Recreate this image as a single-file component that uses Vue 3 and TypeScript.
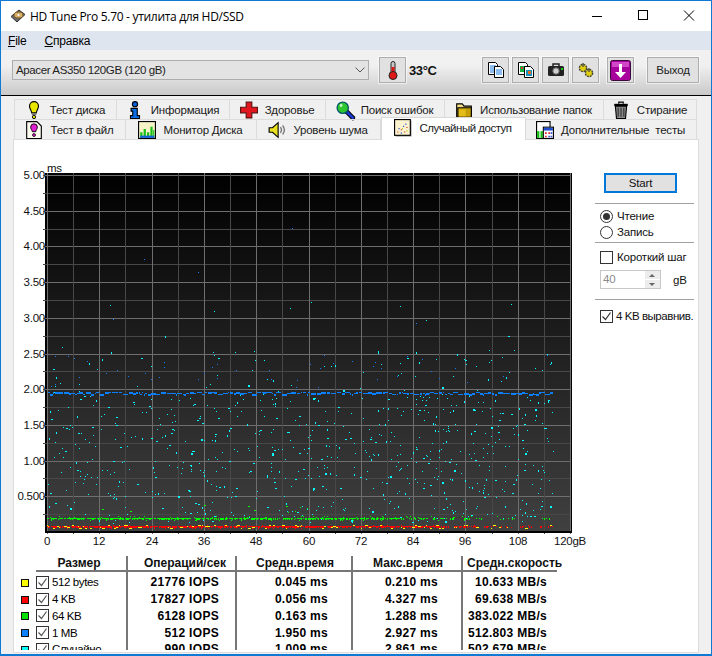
<script setup lang="ts">
type Tab = { label: string; icon: string; width: number; active?: boolean }

const icons: Record<string, string> = {
  bulb: '<path d="M4 4.600a4 4 0 1 1 8 0c0 2-1.600 3.400-2 6H6c-.4-2.600-2-4-2-6z" fill="#e6e600" stroke="#000"/><rect x="6" y="11" width="4" height="1.500" fill="#777"/><circle cx="8" cy="14.200" r="1.500" fill="#d8d800" stroke="#000" stroke-width=".8"/>',
  info: '<circle cx="8" cy="2.800" r="2.300" fill="#0a63dc" stroke="#000"/><path d="M4.500 6.500h5.500v6.500h2v2.500H4V13h2V9H4.500z" fill="#0a6ee6" stroke="#000"/>',
  cross: '<path d="M5.500 1h5v4.500H15.500v5H10.500V15h-5v-4.500H.5v-5h5z" fill="#e2161f" stroke="#5a1010"/>',
  lens: '<path d="M9.500 9.500l5.500 5.500" stroke="#000" stroke-width="4.200" stroke-linecap="round"/><path d="M9.500 9.500l5.500 5.500" stroke="#1a38d0" stroke-width="2.400" stroke-linecap="round"/><circle cx="6" cy="6" r="5" fill="#2fc72f" stroke="#056" stroke-width="1.200"/><circle cx="4.500" cy="4" r="1.300" fill="#c8f5c8"/>',
  folder: '<path d="M1.500 14.500V2.500h5l1.500 2h6.500v10z" fill="#f4e08a" stroke="#000"/><path d="M2.500 14.500V6h12v8.500z" fill="#c79f08" stroke="#000"/><path d="M3.500 7.500h6v6h-6z" fill="#e3bd1a"/>',
  trash: '<path d="M2 3.500h12" stroke="#000" stroke-width="2"/><path d="M3 4.500h10l-1 11H4z" fill="#8a8a8a" stroke="#000"/><path d="M5.500 6v8M8 6v8M10.500 6v8" stroke="#333"/><path d="M6 2.500V1h4v1.500" fill="none" stroke="#000"/>',
  pagebulb: '<path d="M1.500.5h9l4 4v11h-13z" fill="#fffdf0" stroke="#000"/><path d="M5 5.500a3 3 0 1 1 6 0c0 1.500-1.200 2.300-1.500 4h-3C6.200 7.800 5 7 5 5.500z" fill="#e020d0" stroke="#000" stroke-width=".8"/><circle cx="8" cy="12.500" r="1.300" fill="#e020d0" stroke="#000" stroke-width=".7"/>',
  monitor: '<rect x=".5" y=".5" width="15" height="15" fill="#f6f3c8" stroke="#000"/><path d="M2 10h2v5H2zM5 7h2v8H5zM8 10h2v5H8zM11 5h2v10h-2zM13.500 8h1v7h-1z" fill="#18c018"/><path d="M2 13h12.500v2H2z" fill="#1560e0"/>',
  speaker: '<path d="M1 6h3l5-4.500v13L4 10H1z" fill="#e8e020" stroke="#000"/><path d="M11 5.500c1.200 1.500 1.200 3.500 0 5M13 4c2 2.500 2 5.500 0 8" fill="none" stroke="#777" stroke-width="1.200"/>',
  random: '<rect x="1.500" y="1.500" width="14" height="14" fill="#000" opacity=".5"/><rect x=".5" y=".5" width="14" height="14" fill="#fbf3cf" stroke="#000"/><path d="M3 11h1v1H3zM6 9h1v1H6zM9 11h1v1H9zM11 7h1v1h-1z" fill="#e02020"/><path d="M4 8h1v1H4zM8 6h1v1H8zM10 4h1v1h-1zM6 12h1v1H6z" fill="#2a50d8"/><path d="M7 8h1v1H7zM11 10h1v1h-1z" fill="#c8c020"/>',
  extra: '<rect x=".5" y=".5" width="12" height="15" fill="#fff" stroke="#000"/><path d="M1 9h2v6H1z" fill="#10c010"/><path d="M4 9h2v6H4z" fill="#10c010"/><rect x="6.500" y="5.500" width="9" height="10" fill="#fff" stroke="#000"/><rect x="7" y="6" width="8" height="2.500" fill="#2050d0"/><path d="M8 10h1.500v1.500H8zM11 10h1.500v1.500H11zM8 13h1.500v1.500H8z" fill="#e02030"/><path d="M13 10h1.500v1.500H13zM11 13h1.500v1.500H11zM13 13h1.500v1.500H13z" fill="#3050d8"/>',
}

const rowOne: Tab[] = [
  { label: 'Тест диска', icon: 'bulb', width: 103 },
  { label: 'Информация', icon: 'info', width: 113 },
  { label: 'Здоровье', icon: 'cross', width: 96 },
  { label: 'Поиск ошибок', icon: 'lens', width: 119 },
  { label: 'Использование папок', icon: 'folder', width: 159 },
  { label: 'Стирание', icon: 'trash', width: 93 },
]
const rowTwo: Tab[] = [
  { label: 'Тест в файл', icon: 'pagebulb', width: 112 },
  { label: 'Монитор Диска', icon: 'monitor', width: 131 },
  { label: 'Уровень шума', icon: 'speaker', width: 124 },
  { label: 'Случайный доступ', icon: 'random', width: 145, active: true },
  { label: 'Дополнительные  тесты', icon: 'extra', width: 171 },
]

const X0 = 47
const Y0 = 532
const stepX = 26.15
const stepY = 17.85

const vLines = Array.from({ length: 21 }, (_, i) => ({
  x: Math.round(X0 + i * stepX) + 0.5,
  major: i % 2 === 0,
}))
const hLines = Array.from({ length: 20 }, (_, i) => ({
  y: Math.round(Y0 - (i + 1) * stepY) + 0.5,
  major: i % 2 === 1,
}))
const yLabels = ['0.500', '1.00', '1.50', '2.00', '2.50', '3.00', '3.50', '4.00', '4.50', '5.00'].map((t, i) => ({
  t,
  y: Math.round(Y0 - (i + 1) * 2 * stepY) + 4,
}))
const xLabels = [0, 12, 24, 36, 48, 60, 72, 84, 96, 108].map((v, i) => ({
  t: String(v),
  x: Math.round(X0 + i * 2 * stepX),
}))

let seed = 90210
function rnd(): number {
  seed = (seed + 0x6d2b79f5) | 0
  let t = Math.imul(seed ^ (seed >>> 15), 1 | seed)
  t = (t + Math.imul(t ^ (t >>> 7), 61 | t)) ^ t
  return ((t ^ (t >>> 14)) >>> 0) / 4294967296
}
const square = (x: number, y: number, w = 1, h = 1) => `M${Math.round(x)} ${Math.round(y)}h${w}v${h}h${-w}z`

function cyanDots(): string {
  let d = ''
  for (let i = 0; i < 760; i++) {
    const x = 48 + rnd() * 505
    const band = rnd()
    const y = band < 0.88 ? 396 + rnd() * 127 : band < 0.98 ? 350 + rnd() * 45 : 300 + rnd() * 60
    d += square(x, y, rnd() < 0.2 ? 2 : 1, rnd() < 0.15 ? 2 : 1)
  }
  return d
}
function blueDots(): string {
  let d = ''
  let x = 48
  while (x < 553) {
    const w = 1 + Math.floor(rnd() * 5)
    d += square(x, 392 + Math.floor(rnd() * 3), w, 1 + Math.floor(rnd() * 2))
    x += w + (rnd() < 0.4 ? 1 : 0)
  }
  for (let i = 0; i < 45; i++) d += square(48 + rnd() * 500, 355 + rnd() * 34)
  for (let i = 0; i < 5; i++) d += square(100 + rnd() * 400, 220 + rnd() * 120)
  return d
}
function greenDots(): string {
  let d = ''
  for (let x = 47; x < 553; x++) {
    const dense = x < 400 ? 0.82 : x < 470 ? 0.45 : 0.14
    if (rnd() < dense) d += square(x, 518, 1, rnd() < 0.5 ? 2 : 1)
    if (rnd() < dense * 0.3) d += square(x, 516 + Math.floor(rnd() * 5))
  }
  for (let i = 0; i < 10; i++) d += square(60 + rnd() * 300, 505 + rnd() * 8, 1 + Math.floor(rnd() * 2))
  return d
}
function redDots(): string {
  let d = ''
  for (let x = 47; x < 553; x++) {
    const dense = x < 440 ? 0.95 : x < 500 ? 0.55 : 0.25
    if (rnd() < dense) d += square(x, 526, 1, rnd() < 0.6 ? 2 : 1)
    if (rnd() < dense * 0.15) d += square(x, 525 + Math.floor(rnd() * 4))
  }
  return d
}
function yellowDots(): string {
  let d = ''
  let x = 47
  while (x < 553) {
    const w = 1 + Math.floor(rnd() * 3)
    if (rnd() < (x < 500 ? 0.42 : 0.25)) d += square(x, 525 + Math.floor(rnd() * 4), w, 1)
    x += w + Math.floor(rnd() * 2)
  }
  return d
}
const series = [
  { color: '#00ffff', d: cyanDots() },
  { color: '#0a80ff', d: blueDots() },
  { color: '#00ff00', d: greenDots() },
  { color: '#ff0000', d: redDots() },
  { color: '#ffff00', d: yellowDots() },
]

const legend = ['#ffff00', '#ff0000', '#00e000', '#0a80ff', '#00ffff']
const sizes = ['512 bytes', '4 KB', '64 KB', '1 MB', 'Случайно']
const columns = [
  { title: 'Операций/сек', cls: 'c1', unit: 'IOPS', values: ['21776', '17827', '6128', '512', '990'] },
  { title: 'Средн.время', cls: 'c2', unit: 'ms', values: ['0.045', '0.056', '0.163', '1.950', '1.009'] },
  { title: 'Макс.время', cls: 'c3', unit: 'ms', values: ['0.210', '4.327', '1.288', '2.927', '2.861'] },
  { title: 'Средн.скорость', cls: 'c4', unit: 'MB/s', values: ['10.633', '69.638', '383.022', '512.803', '502.679'] },
]
</script>

<template>
  <div class="window">
    <header class="titlebar">
      <svg class="app-icon" width="16" height="16" viewBox="0 0 16 16">
        <path d="M1 8.500L9 2l6 4.500L7 14z" fill="#6a6a6a" stroke="#333" />
        <ellipse cx="8.500" cy="7" rx="4.500" ry="3" fill="#d9b06a" stroke="#7a5a20" />
        <circle cx="8.500" cy="7" r="1" fill="#fff" />
      </svg>
      <span class="title">HD Tune Pro 5.70 - утилита для HD/SSD</span>
      <div class="win-buttons">
        <svg width="46" height="30" viewBox="0 0 46 30"><path d="M18 15.500h10" stroke="#000" /></svg>
        <svg width="46" height="30" viewBox="0 0 46 30"><rect x="18.500" y="9.500" width="9" height="9" fill="none" stroke="#000" /></svg>
        <svg width="46" height="30" viewBox="0 0 46 30"><path d="M18 9.500l10 10M28 9.500l-10 10" stroke="#000" /></svg>
      </div>
    </header>

    <nav class="menubar">
      <span><u>F</u>ile</span>
      <span><u>С</u>правка</span>
    </nav>

    <div class="toolbar">
      <div class="combo">
        <span>Apacer AS350 120GB (120 gB)</span>
        <svg width="10" height="6" viewBox="0 0 10 6"><path d="M.5.500L5 5l4.500-4.500" fill="none" stroke="#555" /></svg>
      </div>
      <button class="tool tool-temp">
        <svg width="12" height="19" viewBox="0 0 12 19">
          <rect x="4" y=".5" width="4" height="12" rx="2" fill="#c8c8c8" stroke="#222" />
          <rect x="4.500" y="6" width="3" height="7" fill="#e01818" />
          <circle cx="6" cy="14.500" r="4" fill="#e01818" stroke="#222" />
        </svg>
      </button>
      <strong class="temp">33°C</strong>
      <div class="tool-group">
        <button class="tool">
          <svg width="16" height="16" viewBox="0 0 16 16">
            <path d="M.5.500h7l2 2v10h-9z" fill="#fff" stroke="#000" />
            <path d="M2 4h6M2 6h6M2 8h6M2 10h6" stroke="#1a7ae0" />
            <path d="M6.500 4.500h6l3 3v8h-9z" fill="#fff" stroke="#000" />
            <path d="M8 8h6M8 10h6M8 12h6" stroke="#1a7ae0" />
          </svg>
        </button>
        <button class="tool">
          <svg width="16" height="16" viewBox="0 0 16 16">
            <path d="M.5.500h7l2 2v10h-9z" fill="#fff" stroke="#000" />
            <rect x="2" y="4" width="5" height="6" fill="#18b040" />
            <rect x="3" y="5" width="2" height="2" fill="#e03030" />
            <path d="M6.500 4.500h6l3 3v8h-9z" fill="#fff" stroke="#000" />
            <rect x="8" y="8" width="6" height="6" fill="#1a90c0" />
            <rect x="10" y="9" width="3" height="3" fill="#e07020" />
          </svg>
        </button>
        <button class="tool">
          <svg width="16" height="14" viewBox="0 0 16 14">
            <path d="M5 3V1h6v2" fill="none" stroke="#222" stroke-width="1.500" />
            <rect x="0" y="3" width="16" height="10" rx="1.500" fill="#222" />
            <circle cx="8" cy="8" r="3.200" fill="#cfcfcf" stroke="#666" />
            <rect x="13" y="5" width="2" height="2" fill="#18d018" />
          </svg>
        </button>
        <button class="tool">
          <svg width="16" height="16" viewBox="0 0 16 16">
            <circle cx="5" cy="6" r="3.600" fill="#e0d010" stroke="#443" stroke-width="1.400" stroke-dasharray="2 .8" />
            <circle cx="11" cy="11" r="3.600" fill="#e0d010" stroke="#443" stroke-width="1.400" stroke-dasharray="2 .8" />
            <path d="M5 1v4M11 6v4" stroke="#554" stroke-width="1.400" />
          </svg>
        </button>
        <button class="tool tool-save">
          <svg width="21" height="21" viewBox="0 0 21 21">
            <rect x=".5" y=".5" width="20" height="20" rx="2" fill="#a8009c" stroke="#3a0a3a" />
            <rect x="2" y="2" width="17" height="5" fill="#d048c8" />
            <path d="M9 4h3v8h4l-5.500 6L5 12h4z" fill="#fff" />
          </svg>
        </button>
      </div>
      <button class="tool tool-exit">Выход</button>
    </div>

    <div class="tabs">
      <div class="tab-row">
        <div v-for="t in rowOne" :key="t.label" class="tab" :style="{ width: t.width + 'px' }">
          <svg class="tab-icon" viewBox="0 0 16 16" v-html="icons[t.icon]"></svg>
          <span>{{ t.label }}</span>
        </div>
      </div>
      <div class="tab-row">
        <div
          v-for="t in rowTwo"
          :key="t.label"
          class="tab"
          :class="{ active: t.active }"
          :style="{ width: t.width + 'px' }"
        >
          <svg class="tab-icon" viewBox="0 0 16 16" v-html="icons[t.icon]"></svg>
          <span class="pre">{{ t.label }}</span>
        </div>
      </div>
    </div>

    <main class="panel">
      <div class="upper">
        <svg class="chart" width="576" height="392" viewBox="14 158 576 392">
          <defs>
            <linearGradient id="plot" x1="0" y1="0" x2="0" y2="1">
              <stop offset="0" stop-color="#000" />
              <stop offset="1" stop-color="#404040" />
            </linearGradient>
          </defs>
          <rect x="45" y="173" width="527" height="360" fill="#000" />
          <rect x="47" y="173" width="524" height="358" fill="url(#plot)" />
          <g shape-rendering="crispEdges">
            <path
              v-for="l in hLines"
              :key="l.y"
              :d="`M43 ${l.y}H570`"
              :stroke="l.major ? '#6e6e6e' : '#484848'"
            />
            <path
              v-for="l in vLines"
              :key="l.x"
              :d="`M${l.x} 173V534`"
              :stroke="l.major ? '#6e6e6e' : '#484848'"
            />
            <path v-for="s in series" :key="s.color" :d="s.d" :fill="s.color" />
            <path d="M45 531.500H571M45 532.500H571" stroke="#000" />
          </g>
          <text class="axis" x="47" y="172">ms</text>
          <text v-for="l in yLabels" :key="l.t" class="axis" x="45" :y="l.y" text-anchor="end">{{ l.t }}</text>
          <text v-for="l in xLabels" :key="l.t" class="axis" :x="l.x" y="545" text-anchor="middle">{{ l.t }}</text>
          <text class="axis" x="570" y="545" text-anchor="middle">120gB</text>
        </svg>

        <aside class="side">
          <button class="start">Start</button>
          <div class="rule rule-a"></div>
          <label class="opt opt-first"><span class="radio on"></span>Чтение</label>
          <label class="opt"><span class="radio"></span>Запись</label>
          <div class="rule rule-b"></div>
          <label class="opt opt-short"><span class="check"></span>Короткий шаг</label>
          <div class="size-row">
            <div class="spin">
              <span class="spin-value">40</span>
              <span class="spin-arrows">
                <span class="up"></span>
                <span class="down"></span>
              </span>
            </div>
            <span class="unit">gB</span>
          </div>
          <div class="rule rule-c"></div>
          <label class="opt opt-align">
            <span class="check">
              <svg width="11" height="11" viewBox="0 0 11 11"><path d="M1.500 5.500l3 3 5-7" fill="none" stroke="#333" stroke-width="1.200" /></svg>
            </span>4 KB выравнив.
          </label>
        </aside>
      </div>

      <section class="table">
        <div class="legend">
          <span v-for="c in legend" :key="c" class="cell"><i class="swatch" :style="{ background: c }"></i></span>
        </div>
        <div class="col c0">
          <div class="head">Размер</div>
          <div class="cells">
            <div v-for="s in sizes" :key="s" class="cell size">
              <span class="check">
                <svg width="11" height="11" viewBox="0 0 11 11"><path d="M1.500 5.500l3 3 5-7" fill="none" stroke="#555" stroke-width="1.200" /></svg>
              </span>
              <span>{{ s }}</span>
            </div>
          </div>
        </div>
        <div v-for="c in columns" :key="c.title" class="col" :class="c.cls">
          <div class="head">{{ c.title }}</div>
          <div class="cells">
            <div v-for="v in c.values" :key="v" class="cell value">{{ v }} {{ c.unit }}</div>
          </div>
        </div>
      </section>
    </main>
  </div>
</template>

<style>
html,
body {
  margin: 0;
  background: #fff;
}
</style>

<style scoped>
.window {
  box-sizing: border-box;
  width: 712px;
  height: 656px;
  border: 1px solid #0e7ad3;
  border-bottom-width: 2px;
  background: #f0f0f0;
  font: 11.5px "Liberation Sans", Arial, sans-serif;
  letter-spacing: -0.2px;
  color: #000;
  overflow: hidden;
  display: flex;
  flex-direction: column;
}
.titlebar {
  height: 30px;
  flex: none;
  background: #fff;
  display: flex;
  align-items: center;
}
.app-icon {
  margin-left: 9px;
  margin-right: 4px;
}
.title {
  font: 12px "Open Sans", sans-serif;
  letter-spacing: -0.3px;
}
.win-buttons {
  margin-left: auto;
  display: flex;
  margin-right: -1px;
}
.menubar {
  height: 19px;
  flex: none;
  background: #dfe5ee;
  display: flex;
  align-items: center;
  gap: 18px;
  padding-left: 7px;
  font-size: 12px;
}
.toolbar {
  height: 46px;
  flex: none;
  box-sizing: border-box;
  border-bottom: 1px solid #000;
  background: linear-gradient(#f1f1f1, #f0f0f0 35%, #c9c9c9);
  display: flex;
  align-items: center;
  padding: 0 11px 0 11px;
}
.combo {
  box-sizing: border-box;
  width: 357px;
  height: 20px;
  margin-top: -5px;
  border: 1px solid #adadad;
  background: #e3e3e3;
  display: flex;
  align-items: center;
  justify-content: space-between;
  padding: 0 3px;
  color: #222;
  letter-spacing: -0.38px;
}
.tool {
  box-sizing: border-box;
  width: 27px;
  height: 26px;
  padding: 0;
  border: 1px solid #adadad;
  background: #e1e1e1;
  box-shadow: 0 0 0 1px rgba(255, 255, 255, 0.55);
  display: flex;
  align-items: center;
  justify-content: center;
  font: inherit;
  letter-spacing: inherit;
  color: #222;
  margin-top: -5px;
}
.tool-temp {
  margin-left: 10px;
}
.temp {
  margin: -5px 0 0 3px;
  font-size: 13px;
  letter-spacing: -0.4px;
  width: 73px;
  flex: none;
  color: #111;
}
.tool-group {
  display: flex;
  gap: 3px;
}
.tool-save {
  margin-left: 5px;
}
.tool-exit {
  width: 52px;
  margin-left: 13px;
}
.tabs {
  flex: none;
  padding: 3px 0 0 13px;
}
.tab-row {
  display: flex;
  height: 20px;
}
.tab {
  box-sizing: border-box;
  flex: none;
  display: flex;
  align-items: center;
  justify-content: center;
  gap: 8px;
  border-top: 1px solid #dcdcdc;
  border-right: 1px solid #dcdcdc;
  color: #1a1a1a;
  white-space: nowrap;
}
.tab:first-child {
  border-left: 1px solid #dcdcdc;
}
.tab-icon {
  flex: none;
  width: 18px;
  height: 18px;
  margin: -1px;
  overflow: visible;
}
.pre {
  white-space: pre;
}
.tab.active {
  background: #fff;
  margin-top: -2px;
  height: 23px;
  border: 1px solid #d9d9d9;
  border-bottom: none;
  position: relative;
  z-index: 1;
  padding-bottom: 2px;
  letter-spacing: -0.5px;
}
.panel {
  box-sizing: border-box;
  width: 686px;
  margin-left: 12px;
  height: 514px;
  background: #fff;
  border: 1px solid #dcdcdc;
  flex: none;
}
.upper {
  display: flex;
  padding-top: 18px;
}
.chart {
  flex: none;
  display: block;
}
.axis {
  font: 11.5px "Liberation Sans", Arial, sans-serif;
  letter-spacing: -0.25px;
  fill: #111;
}
.side {
  width: 99px;
  margin-left: 5px;
  padding-top: 15px;
  display: flex;
  flex-direction: column;
}
.start {
  box-sizing: border-box;
  width: 73px;
  height: 20px;
  margin-left: 9px;
  border: 2px solid #0078d7;
  background: #e1e1e1;
  padding: 0;
  font: inherit;
  letter-spacing: inherit;
  color: #111;
}
.rule {
  height: 1px;
  background: #a0a0a0;
  flex: none;
}
.rule-a {
  margin-top: 10px;
}
.rule-b {
  margin-top: 2px;
}
.rule-c {
  margin-top: 10px;
}
.opt {
  display: flex;
  align-items: center;
  gap: 4px;
  height: 16px;
  padding-left: 5px;
  white-space: nowrap;
  color: #111;
}
.opt-first {
  margin-top: 4px;
}
.opt-short {
  margin-top: 6px;
}
.opt-align {
  margin-top: 8px;
  gap: 3px;
  letter-spacing: -0.45px;
}
.radio {
  box-sizing: border-box;
  width: 13px;
  height: 13px;
  border-radius: 50%;
  border: 1px solid #333;
  background: #fff;
  flex: none;
  position: relative;
}
.radio.on::after {
  content: "";
  position: absolute;
  left: 2px;
  top: 2px;
  width: 7px;
  height: 7px;
  border-radius: 50%;
  background: #333;
}
.check {
  box-sizing: border-box;
  width: 13px;
  height: 13px;
  border: 1px solid #333;
  background: #fff;
  flex: none;
  display: block;
}
.check svg {
  display: block;
}
.size-row {
  display: flex;
  align-items: center;
  margin-top: 5px;
  padding-left: 5px;
}
.spin {
  box-sizing: border-box;
  width: 61px;
  height: 19px;
  border: 1px solid #c8c8c8;
  display: flex;
  justify-content: space-between;
  background: #fff;
}
.spin-value {
  color: #8a8a8a;
  padding: 2px 0 0 2px;
}
.spin-arrows {
  width: 15px;
  display: flex;
  flex-direction: column;
  gap: 1px;
}
.up,
.down {
  flex: 1;
  background: #ececec;
  position: relative;
}
.up::after,
.down::after {
  content: "";
  position: absolute;
  left: 4px;
  top: 3px;
  border: 3px solid transparent;
  border-top: none;
  border-bottom: 3px solid #666;
}
.down::after {
  border-bottom: none;
  border-top: 3px solid #666;
}
.unit {
  margin-left: 12px;
  color: #111;
}
.table {
  display: flex;
  height: 94px;
  margin-top: 6px;
  overflow: hidden;
  color: #000;
}
.legend {
  width: 22px;
  padding-top: 18px;
  flex: none;
  box-sizing: border-box;
}
.legend .cell {
  padding-left: 7px;
}
.cell {
  height: 16.75px;
  display: flex;
  align-items: center;
  box-sizing: border-box;
  white-space: nowrap;
}
.swatch {
  box-sizing: border-box;
  display: block;
  width: 8px;
  height: 8px;
  border: 1px solid #111;
  margin-top: 1px;
}
.col {
  flex: none;
  box-sizing: border-box;
  border-right: 2px solid #777;
}
.head {
  height: 16px;
  box-sizing: border-box;
  border-bottom: 2px solid #777;
  font-weight: bold;
  font-size: 12px;
  letter-spacing: 0;
  text-align: center;
  white-space: nowrap;
  line-height: 14px;
  margin-right: -2px;
  color: #111;
}
.cells {
  padding-top: 2px;
}
.c0 {
  width: 92px;
}
.c0 .head {
  padding-right: 6px;
}
.c1 {
  width: 109px;
}
.c1 .head {
  padding-left: 5px;
}
.c2 {
  width: 116px;
}
.c3 {
  width: 110px;
}
.c4 {
  width: 94px;
  border-right: none;
}
.c4 .head {
  text-align: left;
  padding-left: 4px;
  margin-right: 0;
}
.size {
  gap: 3px;
  letter-spacing: -0.4px;
}
.value {
  justify-content: flex-end;
  font-weight: bold;
  font-size: 12px;
  letter-spacing: 0.3px;
}
.c1 .value {
  padding-right: 16px;
}
.c2 .value {
  padding-right: 23px;
}
.c3 .value {
  padding-right: 23px;
}
.c4 .value {
  padding-right: 10px;
}
</style>
